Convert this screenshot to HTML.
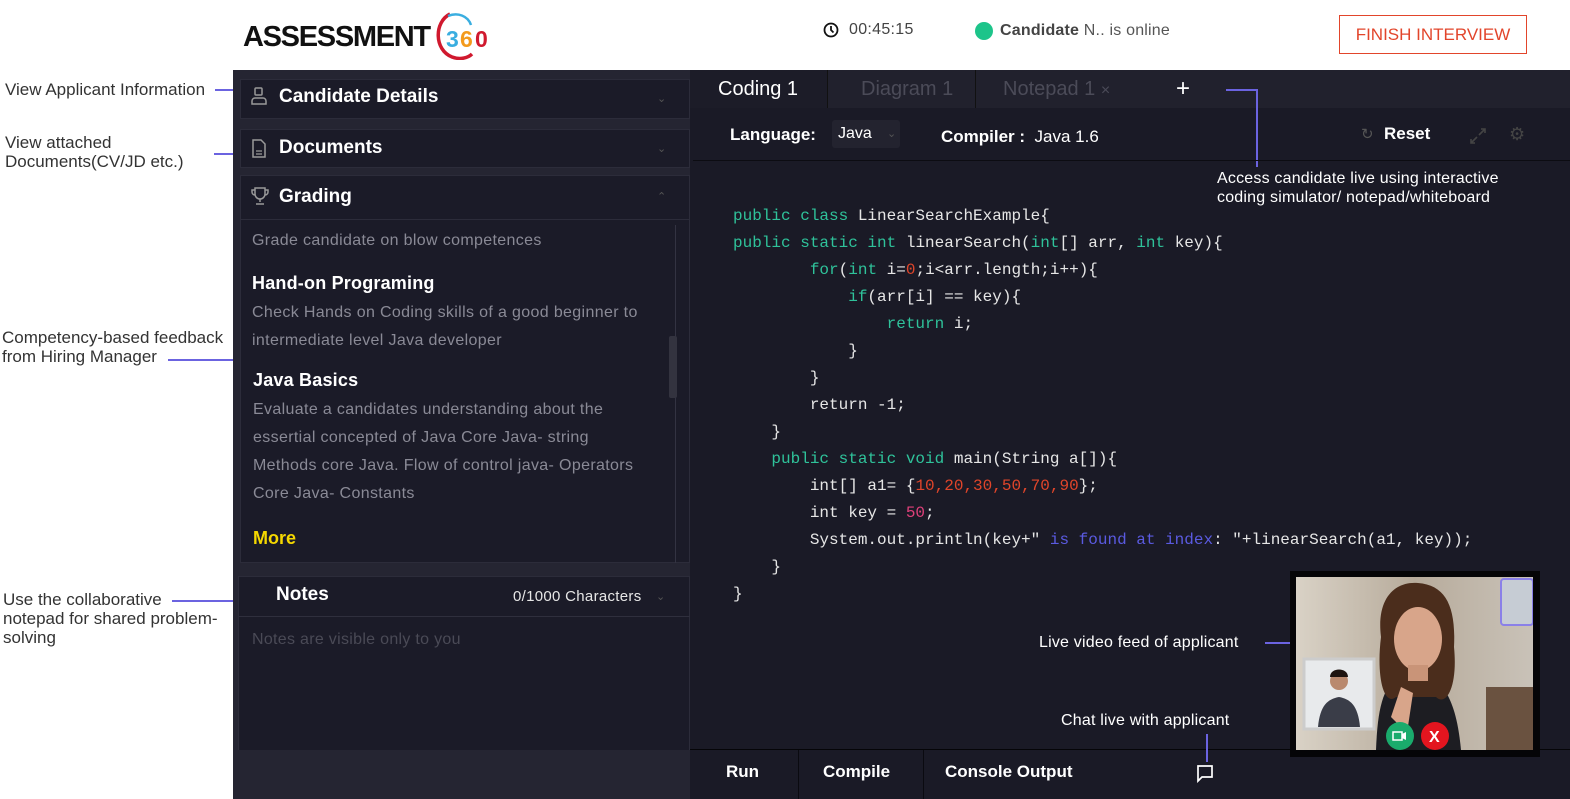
<!DOCTYPE html>
<html><head><meta charset="utf-8"><style>
*{margin:0;padding:0;box-sizing:border-box}
body{width:1570px;height:799px;overflow:hidden;background:#fff;font-family:"Liberation Sans",sans-serif;position:relative}
.a{position:absolute}
.ann{color:#333;font-size:17px;line-height:19px}
.ln{position:absolute;background:#6b63e0;height:2px}
.vl{position:absolute;background:#6b63e0;width:2px}
.mono{font-family:"Liberation Mono",monospace;font-size:16px;color:#e6e6e6;white-space:pre}
.k{color:#2fc29a}.n{color:#e0452a}.p{color:#e0407a}.s{color:#5a5ae0}
.sec{position:absolute;left:240px;width:450px;background:#1b1b28;border:1px solid #2c2c3a}
.sh{color:#fff;font-weight:bold;font-size:19px}
.g{color:#8a8a96;font-size:16px;line-height:28px;letter-spacing:0.35px}
.chev{position:absolute;color:#555;font-size:11px}
</style></head><body>
<!-- annotations -->
<div class="a ann" style="left:5px;top:80px">View Applicant Information</div>
<div class="ln" style="left:215px;top:89px;width:25px"></div>
<div class="a ann" style="left:5px;top:133px">View attached<br>Documents(CV/JD etc.)</div>
<div class="ln" style="left:214px;top:153px;width:26px"></div>
<div class="a ann" style="left:2px;top:328px">Competency-based feedback<br>from Hiring Manager</div>
<div class="ln" style="left:168px;top:359px;width:85px"></div>
<div class="a ann" style="left:3px;top:590px">Use the collaborative<br>notepad for shared problem-<br>solving</div>
<div class="ln" style="left:172px;top:600px;width:86px"></div>

<!-- header -->
<div class="a" style="left:243px;top:21px;font-size:29px;font-weight:bold;color:#111;letter-spacing:-1.3px">ASSESSMENT</div>
<svg class="a" style="left:434px;top:10px" width="62" height="50"><path d="M16 4 C0 12 0 40 18 47 C26 50 34 48 38 44" stroke="#d0192e" stroke-width="3.5" fill="none"/><path d="M14 6 C24 2 34 6 37 15" stroke="#3aaee0" stroke-width="2.5" fill="none"/><text x="12" y="37" font-family="Liberation Sans" font-weight="bold" font-size="23" fill="#3aaee0">3</text><text x="26" y="37" font-family="Liberation Sans" font-weight="bold" font-size="23" fill="#f39a1c">6</text><text x="41" y="37" font-family="Liberation Sans" font-weight="bold" font-size="23" fill="#d0192e">0</text></svg>
<svg class="a" style="left:823px;top:22px" width="16" height="16"><circle cx="8" cy="8" r="6.5" stroke="#111" stroke-width="1.8" fill="none"/><path d="M8 4v4l2.5 2.5" stroke="#111" stroke-width="1.8" fill="none"/></svg>
<div class="a" style="left:849px;top:21px;font-size:16px;color:#444;letter-spacing:0.3px">00:45:15</div>
<div class="a" style="left:975px;top:22px;width:18px;height:18px;border-radius:50%;background:#1dc48a"></div>
<div class="a" style="left:1000px;top:22px;font-size:16px;color:#555;letter-spacing:0.2px"><b style="color:#444">Candidate</b> N.. is online</div>
<div class="a" style="left:1339px;top:15px;width:188px;height:39px;border:1.5px solid #e2452b;color:#e2452b;font-size:17px;text-align:center;line-height:37px">FINISH INTERVIEW</div>

<!-- dark app -->
<div class="a" style="left:233px;top:70px;width:457px;height:729px;background:#252532"></div>
<div class="a" style="left:690px;top:70px;width:880px;height:729px;background:#1a1a26"></div>
<!-- left sections -->
<div class="sec" style="top:79px;height:40px"></div>
<svg class="a" style="left:250px;top:87px" width="18" height="18"><rect x="5" y="1" width="7" height="7" rx="1" stroke="#999" stroke-width="1.5" fill="none"/><path d="M2 17v-3a3 3 0 0 1 3-3h8a3 3 0 0 1 3 3v3z" stroke="#999" stroke-width="1.5" fill="none"/></svg>
<div class="a sh" style="left:279px;top:86px">Candidate Details</div>
<div class="chev" style="left:657px;top:92px">&#8964;</div>
<div class="sec" style="top:129px;height:39px"></div>
<svg class="a" style="left:251px;top:139px" width="16" height="20"><path d="M2 1h8l4 4v13H2z" stroke="#999" stroke-width="1.5" fill="none"/><path d="M5 12h6M5 15h6" stroke="#999" stroke-width="1.3"/></svg>
<div class="a sh" style="left:279px;top:137px">Documents</div>
<div class="chev" style="left:657px;top:142px">&#8964;</div>
<div class="sec" style="top:175px;height:388px"></div>
<div class="a" style="left:241px;top:219px;width:448px;height:1px;background:#2c2c3a"></div>
<svg class="a" style="left:250px;top:186px" width="20" height="20"><path d="M5 2h10v6a5 5 0 0 1-10 0z M5 4H2v2a3 3 0 0 0 3 3 M15 4h3v2a3 3 0 0 1-3 3 M10 13v3 M6 18h8" stroke="#999" stroke-width="1.5" fill="none"/></svg>
<div class="a sh" style="left:279px;top:186px">Grading</div>
<div class="chev" style="left:657px;top:190px">&#8963;</div>
<div class="a" style="left:675px;top:225px;width:1px;height:338px;background:#333342"></div>
<div class="a" style="left:669px;top:336px;width:8px;height:62px;background:#33333f;border-radius:2px"></div>
<div class="a g" style="left:252px;top:227px">Grade candidate on blow competences</div>
<div class="a sh" style="left:252px;top:273px;font-size:18px;letter-spacing:0.2px">Hand-on Programing</div>
<div class="a g" style="left:252px;top:299px">Check Hands on Coding skills of a good beginner to<br>intermediate level Java developer</div>
<div class="a sh" style="left:253px;top:370px;font-size:18px;letter-spacing:0.2px">Java Basics</div>
<div class="a g" style="left:253px;top:396px">Evaluate a candidates understanding about the<br>essertial concepted of Java Core Java- string<br>Methods core Java. Flow of control java- Operators<br>Core Java- Constants</div>
<div class="a" style="left:253px;top:528px;color:#f5d800;font-weight:bold;font-size:18px">More</div>
<div class="sec" style="left:238px;top:576px;height:175px;width:452px"></div>
<div class="a" style="left:239px;top:616px;width:451px;height:1px;background:#2f2f3d"></div>
<div class="a sh" style="left:276px;top:584px">Notes</div>
<div class="a" style="left:513px;top:588px;color:#e6e6e6;font-size:15px;letter-spacing:0.3px">0/1000 Characters</div>
<div class="chev" style="left:656px;top:590px">&#8964;</div>
<div class="a" style="left:252px;top:631px;color:#4a4a56;font-size:16px;letter-spacing:0.3px">Notes are visible only to you</div>

<!-- tabs -->
<div class="a" style="left:690px;top:70px;width:880px;height:38px;background:#21212d"></div>
<div class="a" style="left:690px;top:70px;width:138px;height:38px;background:#1c1c28;border-right:1px solid #111"></div>
<div class="a" style="left:718px;top:78px;color:#fff;font-size:20px">Coding 1</div>
<div class="a" style="left:861px;top:78px;color:#4b4b58;font-size:20px">Diagram 1</div>
<div class="a" style="left:975px;top:70px;width:1px;height:38px;background:#111"></div>
<div class="a" style="left:1003px;top:78px;color:#4b4b58;font-size:20px">Notepad 1 <span style="font-size:16px">×</span></div>
<div class="a" style="left:1176px;top:75px;color:#fff;font-size:24px">+</div>
<div class="ln" style="left:1226px;top:89px;width:31px"></div>
<div class="vl" style="left:1256px;top:89px;height:78px"></div>
<div class="a" style="left:1217px;top:169px;color:#fff;font-size:16px;line-height:19px;letter-spacing:0.2px">Access candidate live using interactive<br>coding simulator/ notepad/whiteboard</div>
<!-- toolbar -->
<div class="a" style="left:730px;top:125px;color:#fff;font-size:17px;font-weight:bold">Language:</div>
<div class="a" style="left:832px;top:120px;width:68px;height:28px;background:#23232f;border-radius:3px"></div>
<div class="a" style="left:838px;top:125px;color:#fff;font-size:16px">Java</div>
<div class="chev" style="left:887px;top:127px">&#8964;</div>
<div class="a" style="left:941px;top:127px;color:#fff;font-size:17px"><b>Compiler :</b> &nbsp;Java 1.6</div>
<div class="a" style="left:1361px;top:125px;color:#555;font-size:15px">&#8635;</div>
<div class="a" style="left:1384px;top:124px;color:#fff;font-size:17px;font-weight:bold">Reset</div>
<svg class="a" style="left:1469px;top:127px" width="18" height="18"><path d="M10 8l6-6M12 2h4v4M8 10l-6 6M2 12v4h4" stroke="#444" stroke-width="1.6" fill="none"/></svg>
<div class="a" style="left:1509px;top:124px;color:#444;font-size:18px">&#9881;</div>
<div class="a" style="left:693px;top:160px;width:877px;height:1px;background:#0c0c12"></div>
<!-- code -->
<div class="a mono" style="left:733px;top:203px;line-height:27px"><span class="k">public class</span> LinearSearchExample{
<span class="k">public static int</span> linearSearch(<span class="k">int</span>[] arr, <span class="k">int</span> key){
        <span class="k">for</span>(<span class="k">int</span> i=<span class="n">0</span>;i&lt;arr.length;i++){
            <span class="k">if</span>(arr[i] == key){
                <span class="k">return</span> i;
            }
        }
        return -1;
    }
    <span class="k">public static void</span> main(String a[]){
        int[] a1= {<span class="n">10,20,30,50,70,90</span>};
        int key = <span class="p">50</span>;
        System.out.println(key+" <span class="s">is found at index</span>: "+linearSearch(a1, key));
    }
}</div>
<!-- bottom bar -->
<div class="a" style="left:690px;top:749px;width:880px;height:1px;background:#050508"></div>
<div class="a" style="left:690px;top:750px;width:880px;height:49px;background:#1a1a26"></div>
<div class="a" style="left:798px;top:750px;width:1px;height:49px;background:#0a0a10"></div>
<div class="a" style="left:923px;top:750px;width:1px;height:49px;background:#0a0a10"></div>
<div class="a" style="left:726px;top:762px;color:#fff;font-size:17px;font-weight:bold">Run</div>
<div class="a" style="left:823px;top:762px;color:#fff;font-size:17px;font-weight:bold">Compile</div>
<div class="a" style="left:945px;top:762px;color:#fff;font-size:17px;font-weight:bold">Console Output</div>
<svg class="a" style="left:1196px;top:764px" width="19" height="19"><path d="M2 2h14v11H6l-4 4z" stroke="#fff" stroke-width="1.7" fill="none"/></svg>
<div class="a" style="left:233px;top:750px;width:457px;height:49px;background:#252532"></div>
<!-- video -->
<div class="a" style="left:1039px;top:634px;color:#fff;font-size:16px;letter-spacing:0.2px">Live video feed of applicant</div>
<div class="ln" style="left:1265px;top:642px;width:40px"></div>
<div class="a" style="left:1061px;top:712px;color:#fff;font-size:16px;letter-spacing:0.2px">Chat live with applicant</div>
<div class="vl" style="left:1206px;top:734px;height:28px"></div>
<div class="a" style="left:1290px;top:571px;width:250px;height:186px;background:#050507"></div>
<svg class="a" style="left:1296px;top:577px" width="237" height="173">
<defs><linearGradient id="bg" x1="0" x2="1"><stop offset="0" stop-color="#d9d2c6"/><stop offset="0.5" stop-color="#b7ab9b"/><stop offset="1" stop-color="#c9c2b8"/></linearGradient></defs>
<rect width="237" height="173" fill="url(#bg)"/>
<rect x="190" y="110" width="47" height="63" fill="#6a5240"/>
<path d="M80 173 C82 120 90 100 118 92 C146 100 160 120 165 173z" fill="#1d1d22"/>
<path d="M85 60 C80 20 100 4 122 6 C150 8 160 30 158 70 C162 110 150 130 140 120 L100 120 C88 130 80 100 85 60z" fill="#4b2d1c"/>
<ellipse cx="122" cy="62" rx="24" ry="32" fill="#d8a58a"/>
<rect x="112" y="88" width="20" height="16" fill="#c99478"/>
<path d="M95 140 l10 -30 12 6 -6 40z" fill="#d8a58a"/>
<rect x="205" y="2" width="32" height="46" rx="3" fill="#c6ccd4" stroke="#8a80e8" stroke-width="2"/>
<rect x="8" y="82" width="70" height="70" fill="#e8eaec" stroke="#ccc" stroke-width="3"/>
<path d="M22 150 C24 128 32 122 43 120 C54 122 62 128 64 150z" fill="#3a3d48"/>
<circle cx="43" cy="104" r="9" fill="#b9896e"/>
<path d="M34 100 C34 90 52 90 52 100z" fill="#1e1410"/>
<circle cx="104" cy="159" r="14" fill="#1aab6c"/>
<rect x="97" y="155" width="9" height="8" fill="none" stroke="#fff" stroke-width="1.5"/><path d="M106 157l4-2v8l-4-2z" fill="#fff"/>
<circle cx="139" cy="159" r="14" fill="#e3151f"/>
<text x="133" y="165" font-family="Liberation Sans" font-weight="bold" font-size="16" fill="#fff">X</text>
</svg>
</body></html>
